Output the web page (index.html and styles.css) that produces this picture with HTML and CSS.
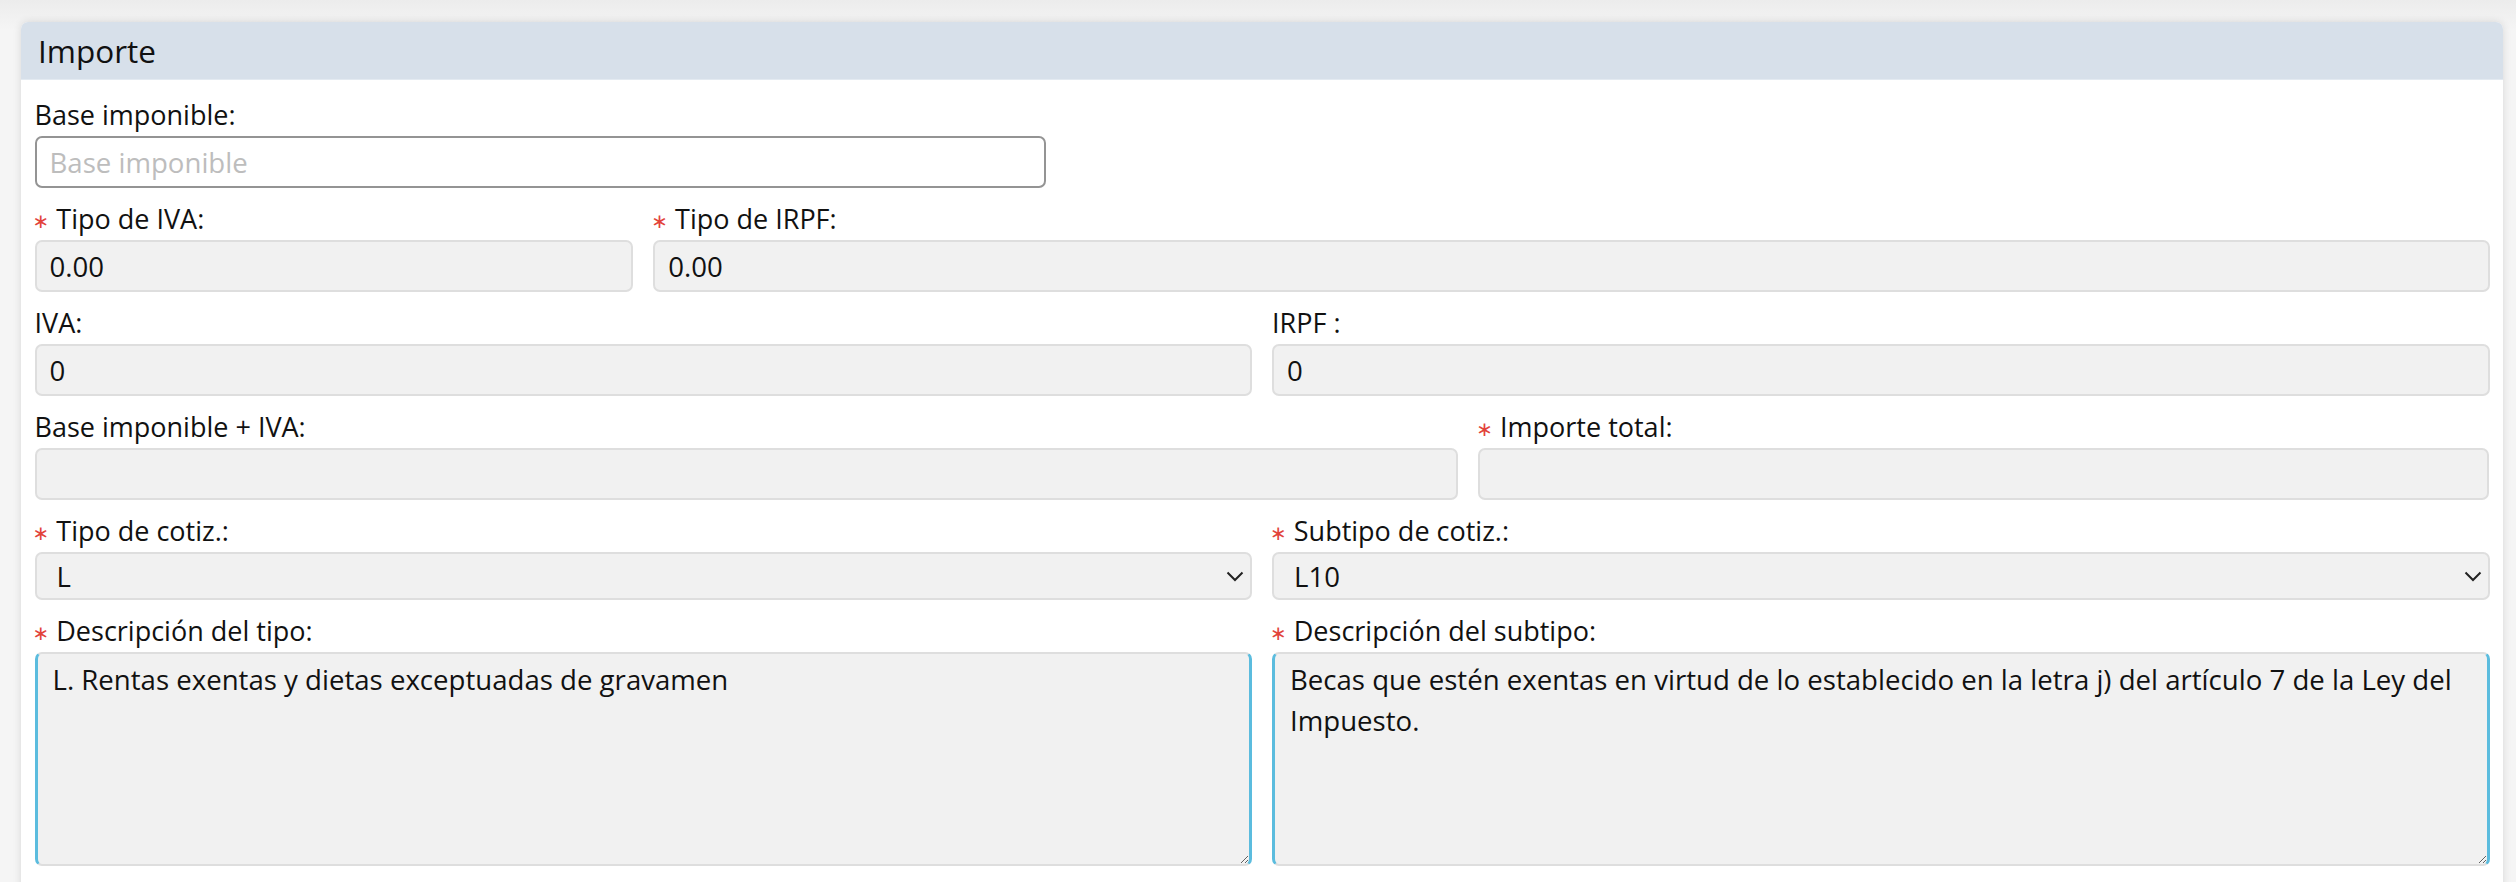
FILE: index.html
```html
<!DOCTYPE html>
<html lang="es">
<head>
    <meta charset="UTF-8">
    <meta name="viewport" content="width=device-width, initial-scale=1.0">
    <title>Importe</title>
    <link rel="stylesheet" href="styles.css">
</head>
<body>
    <div class="card">
        <div class="card-header">Importe</div>

        <div class="card-body">
            <!-- Base imponible -->
            <div class="row">
                <div class="col col-5 form-group">
                    <label for="base">Base imponible:</label>
                    <input type="text" id="base" class="field field-edit" placeholder="Base imponible">
                </div>
            </div>

            <!-- Tipos -->
            <div class="row">
                <div class="col col-3 form-group">
                    <label for="tipoIva"><span class="req">&lowast;</span>Tipo de IVA:</label>
                    <input type="text" id="tipoIva" class="field" value="0.00" readonly>
                </div>
                <div class="col col-9 form-group">
                    <label for="tipoIrpf"><span class="req">&lowast;</span>Tipo de IRPF:</label>
                    <input type="text" id="tipoIrpf" class="field" value="0.00" readonly>
                </div>
            </div>

            <!-- Cuotas -->
            <div class="row">
                <div class="col col-6 form-group">
                    <label for="iva">IVA:</label>
                    <input type="text" id="iva" class="field" value="0" readonly>
                </div>
                <div class="col col-6 form-group">
                    <label for="irpf">IRPF :</label>
                    <input type="text" id="irpf" class="field" value="0" readonly>
                </div>
            </div>

            <!-- Totales -->
            <div class="row">
                <div class="col col-7 form-group">
                    <label for="baseIva">Base imponible + IVA:</label>
                    <input type="text" id="baseIva" class="field" readonly>
                </div>
                <div class="col col-5 form-group">
                    <label for="total"><span class="req">&lowast;</span>Importe total:</label>
                    <input type="text" id="total" class="field" readonly>
                </div>
            </div>

            <!-- Cotizacion -->
            <div class="row">
                <div class="col col-6 form-group">
                    <label for="tipoCotiz"><span class="req">&lowast;</span>Tipo de cotiz.:</label>
                    <div class="select-wrap">
                        <select id="tipoCotiz" class="field field-select">
                            <option>L</option>
                        </select>
                        <svg class="chevron" width="18" height="11" viewBox="0 0 18 11"><path d="M1.5 1.5 L9 9 L16.5 1.5" fill="none" stroke="#222" stroke-width="2"/></svg>
                    </div>
                </div>
                <div class="col col-6 form-group">
                    <label for="subtipoCotiz"><span class="req">&lowast;</span>Subtipo de cotiz.:</label>
                    <div class="select-wrap">
                        <select id="subtipoCotiz" class="field field-select">
                            <option>L10</option>
                        </select>
                        <svg class="chevron" width="18" height="11" viewBox="0 0 18 11"><path d="M1.5 1.5 L9 9 L16.5 1.5" fill="none" stroke="#222" stroke-width="2"/></svg>
                    </div>
                </div>
            </div>

            <!-- Descripciones -->
            <div class="row">
                <div class="col col-6 form-group">
                    <label for="descTipo"><span class="req">&lowast;</span>Descripción del tipo:</label>
                    <textarea id="descTipo" class="field field-area" readonly>L. Rentas exentas y dietas exceptuadas de gravamen</textarea>
                </div>
                <div class="col col-6 form-group">
                    <label for="descSubtipo"><span class="req">&lowast;</span>Descripción del subtipo:</label>
                    <textarea id="descSubtipo" class="field field-area" readonly>Becas que estén exentas en virtud de lo establecido en la letra j) del artículo 7 de la Ley del Impuesto.</textarea>
                </div>
            </div>
        </div>
    </div>
</body>
</html>
```

FILE: styles.css
```css
/* Page */
body {
    margin: 0;
    font-family: "Open Sans", "Noto Sans", sans-serif;
    font-size: 27px;
    color: #111;
    background: linear-gradient(#ececec, #f5f5f5 30px);
    min-height: 100vh;
}

/* Panel */
.card {
    margin: 22px 13px 0 21px;
    background-color: #fff;
    border-radius: 7px 7px 0 0;
    box-shadow: 0 0 8px rgba(0, 0, 0, 0.12);
    min-height: 870px;
}

.card-header {
    height: 57px;
    display: flex;
    align-items: center;
    padding: 0 17px;
    font-size: 31.5px;
    background-color: #d7e0ea;
    border-bottom: 1px solid #e3eaf1;
    border-radius: 7px 7px 0 0;
}

.card-body {
    padding: 18px 3.5px 0;
}

/* Grid */
.row {
    display: flex;
}

.col {
    box-sizing: border-box;
    padding: 0 10px;
}

.col-3 { flex: 0 0 25%; }
.col-5 { flex: 0 0 41.6667%; }
.col-6 { flex: 0 0 50%; }
.col-7 { flex: 0 0 58.3333%; }
.col-9 { flex: 0 0 75%; }

/* Form groups */
.form-group {
    margin-bottom: 14px;
}

label {
    display: block;
    height: 33px;
    line-height: 33px;
    margin-bottom: 5px;
    white-space: nowrap;
}

.req {
    color: #e2433b;
    margin-left: -2px;
    margin-right: 7px;
    font-family: "DejaVu Sans", sans-serif;
    font-size: 20px;
    line-height: 0;
    vertical-align: 1px;
}

/* Fields */
.field {
    display: block;
    width: 100%;
    height: 52px;
    box-sizing: border-box;
    padding: 0 13px;
    font-family: inherit;
    font-size: 27.6px;
    color: #111;
    background-color: #f1f1f1;
    border: 2px solid #dedede;
    border-radius: 7px;
    outline: none;
}

.field-edit {
    background-color: #fff;
    border-color: #949494;
}

.field-edit::placeholder {
    color: #bdbdbd;
}

.select-wrap {
    position: relative;
}

.field-select {
    height: 48px;
    padding-left: 20px;
    appearance: none;
    -webkit-appearance: none;
}

.chevron {
    position: absolute;
    right: 8px;
    top: 19px;
    pointer-events: none;
}

.field-area {
    height: 214px;
    padding: 5px 15px;
    line-height: 41px;
    border-left: 3px solid #5bbcde;
    border-right: 3px solid #5bbcde;
    resize: both;
}
```
